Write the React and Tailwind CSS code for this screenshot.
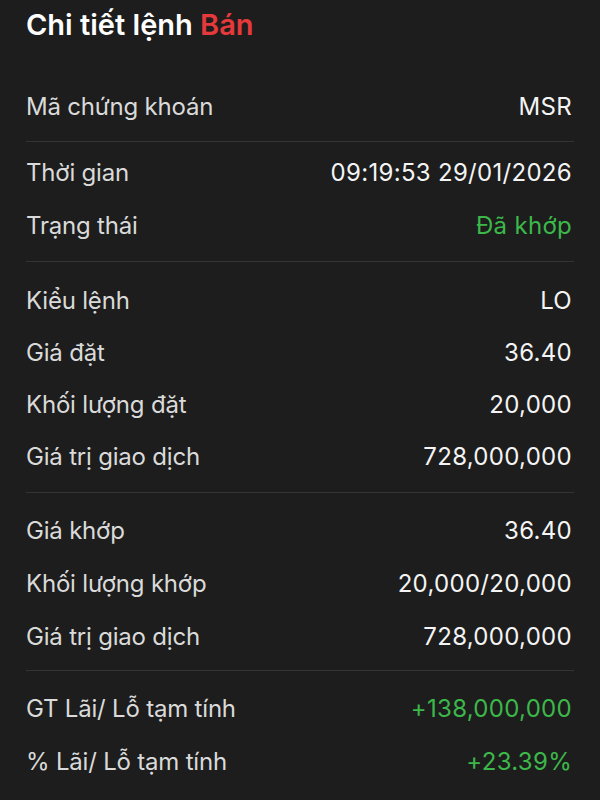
import React from "react";

const font = { fontFamily: "Inter, 'Noto Sans', sans-serif" };

function Row({ label, value, valueClass = "text-[#f4f4f4]", h = "h-[52px]" }) {
  return (
    <div className={`flex ${h} items-center justify-between`}>
      <span className="text-[24px] leading-[52px] text-[#dadada] tracking-[-0.2px]">{label}</span>
      <span className={`text-[24px] leading-[52px] tracking-[0.3px] pr-[2px] ${valueClass}`}>{value}</span>
    </div>
  );
}

function Divider() {
  return <div className="h-px bg-[#343434]" />;
}

export default function App() {
  return (
    <div className="w-[600px] h-[800px] bg-[#1d1d1d] overflow-hidden" style={font}>
      <div className="mx-[26px]">
        <div className="pt-[5px] h-[81px]">
          <h1 className="text-[29px] leading-[40px] font-semibold text-white">
            Chi tiết lệnh <span className="text-[#e5393b]">Bán</span>
          </h1>
        </div>
        <div className="pb-[8px]">
          <Row label="Mã chứng khoán" value="MSR" />
        </div>
        <Divider />
        <div className="pt-[4px] pb-[9px]">
          <Row label="Thời gian" value="09:19:53 29/01/2026" h="h-[53px]" />
          <Row label="Trạng thái" value="Đã khớp" valueClass="text-[#3cb84a]" h="h-[53px]" />
        </div>
        <Divider />
        <div className="pt-[13px] pb-[9px]">
          <Row label="Kiểu lệnh" value="LO" />
          <Row label="Giá đặt" value="36.40" />
          <Row label="Khối lượng đặt" value="20,000" />
          <Row label="Giá trị giao dịch" value="728,000,000" />
        </div>
        <Divider />
        <div className="pt-[11px] pb-[7px]">
          <Row label="Giá khớp" value="36.40" h="h-[53px]" />
          <Row label="Khối lượng khớp" value="20,000/20,000" h="h-[53px]" />
          <Row label="Giá trị giao dịch" value="728,000,000" h="h-[53px]" />
        </div>
        <Divider />
        <div className="pt-[11px]">
          <Row label="GT Lãi/ Lỗ tạm tính" value="+138,000,000" valueClass="text-[#3cb84a]" h="h-[53px]" />
          <Row label="% Lãi/ Lỗ tạm tính" value="+23.39%" valueClass="text-[#3cb84a]" h="h-[53px]" />
        </div>
      </div>
    </div>
  );
}
